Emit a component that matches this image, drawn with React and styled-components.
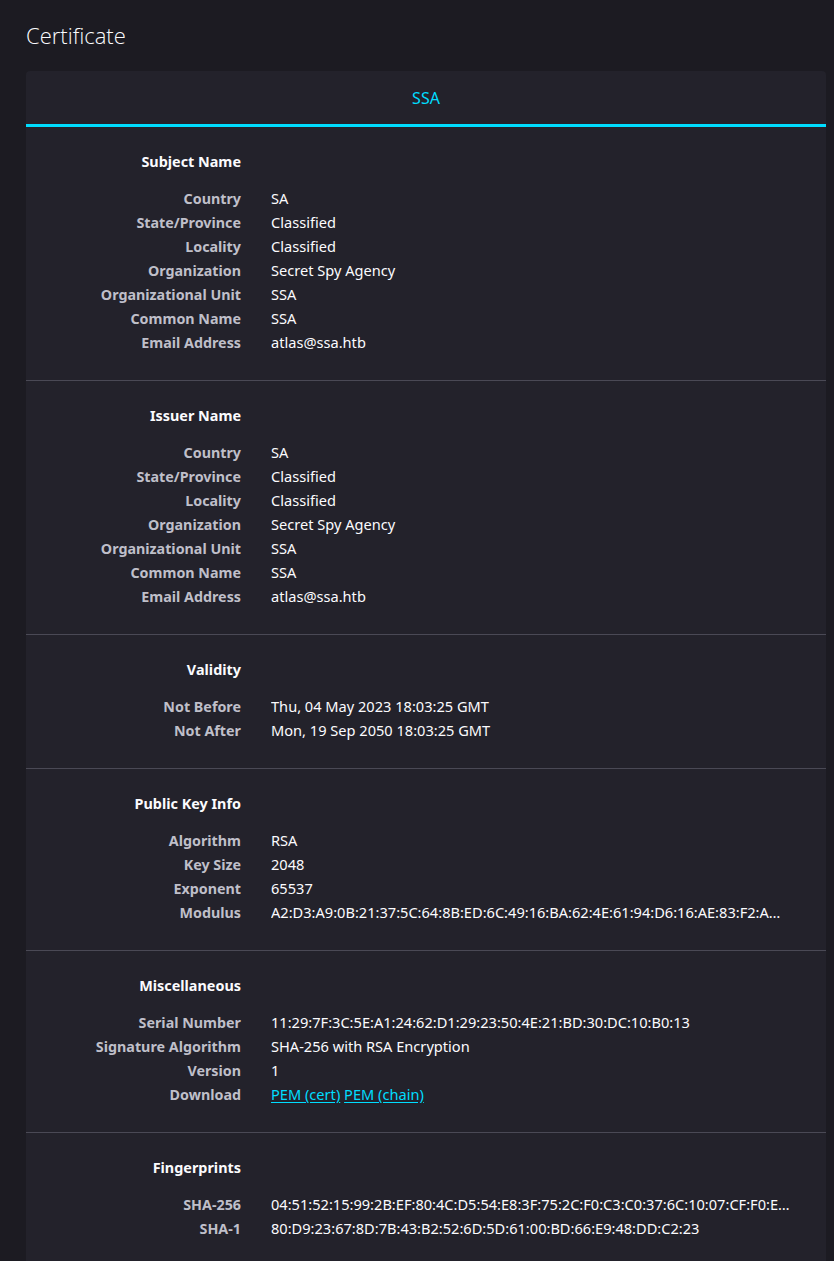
import styled, { createGlobalStyle } from "styled-components";

const sections = [
  {
    title: "Subject Name",
    rows: [
      ["Country", "SA"],
      ["State/Province", "Classified"],
      ["Locality", "Classified"],
      ["Organization", "Secret Spy Agency"],
      ["Organizational Unit", "SSA"],
      ["Common Name", "SSA"],
      ["Email Address", "atlas@ssa.htb"],
    ],
  },
  {
    title: "Issuer Name",
    rows: [
      ["Country", "SA"],
      ["State/Province", "Classified"],
      ["Locality", "Classified"],
      ["Organization", "Secret Spy Agency"],
      ["Organizational Unit", "SSA"],
      ["Common Name", "SSA"],
      ["Email Address", "atlas@ssa.htb"],
    ],
  },
  {
    title: "Validity",
    rows: [
      ["Not Before", "Thu, 04 May 2023 18:03:25 GMT"],
      ["Not After", "Mon, 19 Sep 2050 18:03:25 GMT"],
    ],
  },
  {
    title: "Public Key Info",
    rows: [
      ["Algorithm", "RSA"],
      ["Key Size", "2048"],
      ["Exponent", "65537"],
      ["Modulus", "A2:D3:A9:0B:21:37:5C:64:8B:ED:6C:49:16:BA:62:4E:61:94:D6:16:AE:83:F2:A…"],
    ],
  },
  {
    title: "Miscellaneous",
    rows: [
      ["Serial Number", "11:29:7F:3C:5E:A1:24:62:D1:29:23:50:4E:21:BD:30:DC:10:B0:13"],
      ["Signature Algorithm", "SHA-256 with RSA Encryption"],
      ["Version", "1"],
      ["Download", "links"],
    ],
  },
  {
    title: "Fingerprints",
    rows: [
      ["SHA-256", "04:51:52:15:99:2B:EF:80:4C:D5:54:E8:3F:75:2C:F0:C3:C0:37:6C:10:07:CF:F0:E…"],
      ["SHA-1", "80:D9:23:67:8D:7B:43:B2:52:6D:5D:61:00:BD:66:E9:48:DD:C2:23"],
    ],
  },
];

export default function App() {
  return (
    <>
      <GlobalStyle />
      <Page>
        <Title>Certificate</Title>
        <Card>
          <TabBar>
            <Tab>SSA</Tab>
          </TabBar>
          {sections.map((section) => (
            <Section key={section.title}>
              <SectionTitle>{section.title}</SectionTitle>
              {section.rows.map(([label, value]) => (
                <Row key={label}>
                  <Label>{label}</Label>
                  {value === "links" ? (
                    <Value>
                      <Link href="#">PEM (cert)</Link> <Link href="#">PEM (chain)</Link>
                    </Value>
                  ) : (
                    <Value>{value}</Value>
                  )}
                </Row>
              ))}
            </Section>
          ))}
        </Card>
      </Page>
    </>
  );
}

const GlobalStyle = createGlobalStyle`
  html, body {
    margin: 0;
    background-color: #1c1b22;
    font-family: "Noto Sans", "Open Sans", sans-serif;
    color: #fbfbfe;
  }
`;

const Page = styled.div`
  padding: 0 8px 0 26px;
  height: 1261px;
  overflow: hidden;
`;

const Title = styled.h1`
  margin: 0;
  padding: 19px 0 19px 0;
  height: 33px;
  font-family: "Open Sans", sans-serif;
  font-weight: 300;
  font-size: 22px;
  line-height: 33px;
  color: #fbfbfe;
`;

const Card = styled.div`
  background-color: #23222b;
  border-radius: 4px 4px 0 0;
  min-height: 1300px;
`;

const TabBar = styled.div`
  display: flex;
  justify-content: center;
  border-bottom: 3px solid #00ddff;
`;

const Tab = styled.div`
  height: 53px;
  display: flex;
  align-items: center;
  font-size: 16px;
  color: #00ddff;
`;

const Section = styled.div`
  padding: 23px 0 26.5px 0;
  border-bottom: 1px solid #4a4955;
`;

const Row = styled.div`
  display: grid;
  grid-template-columns: 215px minmax(0, 1fr);
  column-gap: 30px;
  height: 24px;
  line-height: 24px;
  align-items: baseline;
  font-size: 14.6px;
  padding-right: 31px;
`;

const SectionTitle = styled.div`
  width: 215px;
  height: 24px;
  line-height: 24px;
  margin-bottom: 11.5px;
  text-align: right;
  font-size: 14.4px;
  font-weight: 700;
  color: #fbfbfe;
`;

const Label = styled.span`
  text-align: right;
  font-size: 14.3px;
  font-weight: 700;
  color: #bfbfc9;
`;

const Value = styled.span`
  white-space: nowrap;
  overflow: hidden;
  text-overflow: ellipsis;
  color: #fbfbfe;
`;

const Link = styled.a`
  color: #00ddff;
  text-decoration: underline;
  text-underline-offset: 2px;
`;
